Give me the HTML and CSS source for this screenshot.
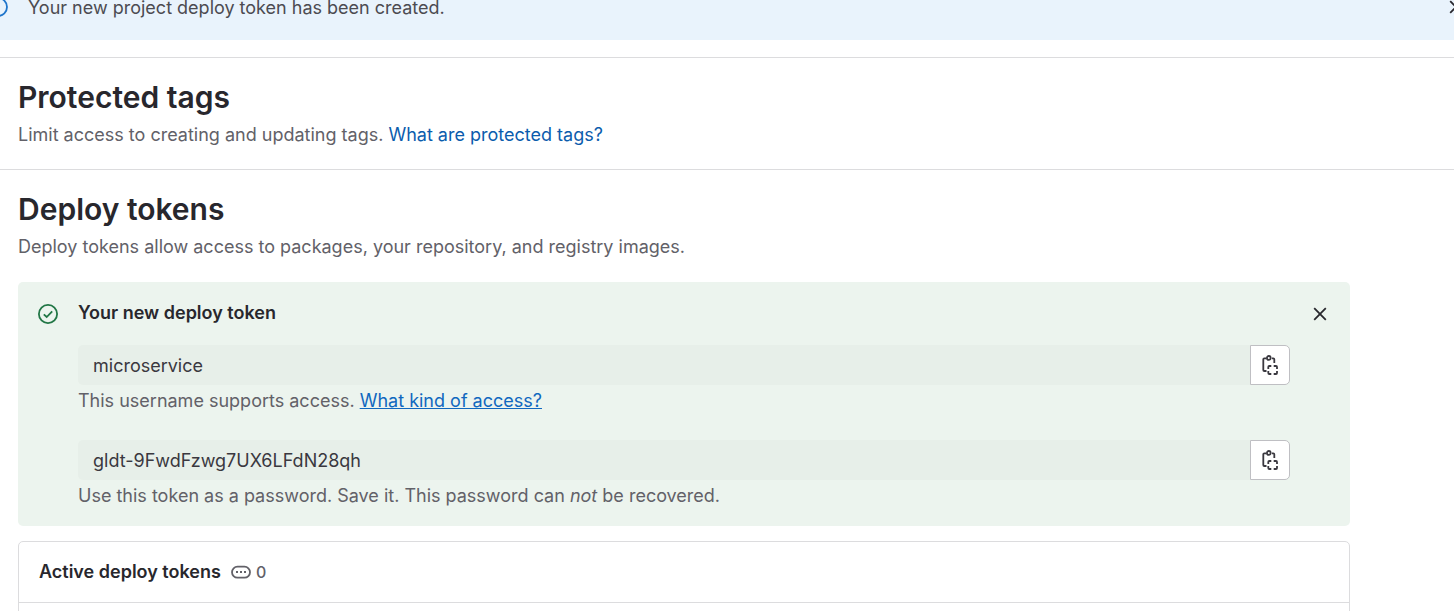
FILE: index.html
```html
<!DOCTYPE html>
<html lang="en">
<head>
<meta charset="utf-8">
<meta name="viewport" content="width=device-width, initial-scale=1">
<title>Repository settings</title>
<link rel="stylesheet" href="styles.css">
</head>
<body>
<div class="banner" role="status">
  <svg class="icon info" viewBox="0 0 20 20" aria-hidden="true"><circle cx="10" cy="10" r="9"/><path d="M10 9v5M8 14h4M10 6v.5"/></svg>
  <p class="banner-text">Your new project deploy token has been created.</p>
  <button class="close" type="button" aria-label="Dismiss message"><svg class="icon" viewBox="0 0 20 20" aria-hidden="true"><path d="M4.200 4.200l11.600 11.600M15.800 4.200L4.200 15.800"/></svg></button>
</div>
<main>
  <section class="settings">
    <h2>Protected tags</h2>
    <p class="description">Limit access to creating and updating tags. <a href="#protected">What are protected tags?</a></p>
  </section>
  <section class="settings">
    <h2>Deploy tokens</h2>
    <p class="description">Deploy tokens allow access to packages, your repository, and registry images.</p>
    <div class="alert">
      <svg class="icon success" viewBox="0 0 20 20" aria-hidden="true"><circle cx="10" cy="10" r="9.100"/><path d="M5.800 10.300l2.900 2.700 5.500-5.700"/></svg>
      <div class="alert-body">
        <h3>Your new deploy token</h3>
        <div class="field">
          <div class="input-group">
            <input id="username" type="text" readonly value="microservice" aria-label="Deploy token username" aria-describedby="username-help">
            <button class="copy" type="button" aria-label="Copy username"><svg class="icon" viewBox="0 0 20 20" aria-hidden="true"><path d="M6.500 16H4.300a1 1 0 0 1-1-1V4.300a1 1 0 0 1 1-1H6M12 3.300h1.300a1 1 0 0 1 1 1V8"/><circle cx="8.800" cy="2.900" r="1.900"/><path d="M8.300 14v-2a1 1 0 0 1 1-1h2M13.700 11h2.300a1 1 0 0 1 1 1v2M17 16v2a1 1 0 0 1-1 1h-2.300M11.300 19h-2a1 1 0 0 1-1-1v-2"/></svg></button>
          </div>
          <p class="help" id="username-help">This username supports access. <a href="#access">What kind of access?</a></p>
        </div>
        <div class="field">
          <div class="input-group">
            <input id="token" type="text" readonly value="gldt-9FwdFzwg7UX6LFdN28qh" aria-label="Deploy token" aria-describedby="token-help">
            <button class="copy" type="button" aria-label="Copy deploy token"><svg class="icon" viewBox="0 0 20 20" aria-hidden="true"><path d="M6.500 16H4.300a1 1 0 0 1-1-1V4.300a1 1 0 0 1 1-1H6M12 3.300h1.300a1 1 0 0 1 1 1V8"/><circle cx="8.800" cy="2.900" r="1.900"/><path d="M8.300 14v-2a1 1 0 0 1 1-1h2M13.700 11h2.300a1 1 0 0 1 1 1v2M17 16v2a1 1 0 0 1-1 1h-2.300M11.300 19h-2a1 1 0 0 1-1-1v-2"/></svg></button>
          </div>
          <p class="help" id="token-help">Use this token as a password. Save it. This password can <em>not</em> be recovered.</p>
        </div>
      </div>
      <button class="close" type="button" aria-label="Dismiss"><svg class="icon" viewBox="0 0 20 20" aria-hidden="true"><path d="M4.200 4.200l11.600 11.600M15.800 4.200L4.200 15.800"/></svg></button>
    </div>
    <div class="card">
      <header class="card-header">
        <h3>Active deploy tokens</h3>
        <span class="count"><svg class="icon" viewBox="0 0 20 20" aria-hidden="true"><rect x="1" y="4.700" width="18" height="11" rx="5.500"/><path class="dots" d="M5 9h2v2H5zM9 9h2v2H9zM13 9h2v2h-2z"/></svg>0</span>
      </header>
      <div class="card-body"></div>
    </div>
  </section>
</main>
</body>
</html>
```
FILE: styles.css
```css
* {
  box-sizing: border-box;
}

body {
  margin: 0;
  overflow: hidden;
  background: #fff;
  color: #28272d;
  font: 18px/25px Inter, "Noto Sans", sans-serif;
}

h2, h3, p {
  margin: 0;
}

h2 {
  font-size: 30px;
  font-weight: 600;
  line-height: 38px;
}

h3 {
  font-size: 18px;
  font-weight: 600;
  line-height: 26px;
}

a {
  color: #0b5cad;
  text-decoration: none;
}

.icon {
  display: block;
  flex: none;
  width: 20px;
  height: 20px;
  fill: none;
  stroke: currentColor;
  stroke-width: 1.8;
}

.banner {
  display: flex;
  align-items: center;
  gap: 20px;
  height: 66px;
  margin: -26px -12px 17px;
  background: #e9f3fc;
  color: #4c4b51;
}

.info {
  color: #1f75cb;
}

.banner-text {
  flex: 1;
}

.close {
  padding: 0;
  border: 0;
  background: none;
  color: #28272d;
}

.settings {
  padding: 20px 104px 22px 18px;
  border-top: 1px solid #dcdcde;
}

.description {
  margin-top: 6px;
  color: #626168;
}

.alert {
  display: flex;
  align-items: flex-start;
  gap: 20px;
  margin-top: 23px;
  padding: 18px 20px;
  border-radius: 5px;
  background: #ecf4ee;
}

.alert > .icon,
.alert > .close {
  margin-top: 4px;
}

.success {
  color: #217645;
}

.alert-body {
  flex: 1;
}

.field {
  margin-top: 19px;
}

.field + .field {
  margin-top: 27px;
}

.input-group {
  display: flex;
}

input {
  flex: 1;
  min-width: 0;
  height: 40px;
  padding: 0 15px;
  border: 0;
  border-radius: 5px 0 0 5px;
  background: #e7efe9;
  color: #3a383f;
  font: inherit;
}

.copy {
  display: grid;
  place-items: center;
  width: 40px;
  height: 40px;
  padding: 0;
  border: 1px solid #bfbfc3;
  border-radius: 0 5px 5px 0;
  background: #fff;
  color: #3a383f;
}

.help {
  margin-top: 3px;
  color: #626168;
}

.help a {
  color: #1068bf;
  text-decoration: underline;
}

.card {
  margin-top: 15px;
  border: 1px solid #dcdcde;
  border-radius: 5px;
}

.card-header {
  display: flex;
  align-items: center;
  gap: 10px;
  padding: 17px 20px;
  border-bottom: 1px solid #dcdcde;
}

.card-body {
  min-height: 20px;
}

.count {
  display: flex;
  align-items: center;
  gap: 5px;
  color: #626168;
  font-size: 16px;
  font-weight: 500;
}

.dots {
  fill: currentColor;
  stroke: none;
}
```
